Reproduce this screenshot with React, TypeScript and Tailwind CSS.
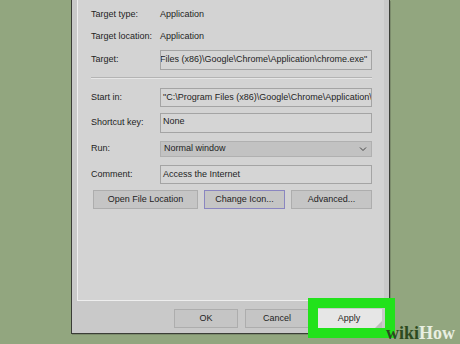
const font = { fontFamily: '"Liberation Sans", Arial, sans-serif' };

const Field = ({ label, children, h, mt }: { label: string; children: React.ReactNode; h: string; mt: string }) => (
  <div className={`flex items-center ${h} ${mt}`}>
    <div className="w-[69px] shrink-0 text-[9px] text-[#1e1e1e]">{label}</div>
    <div className="flex h-full min-w-0 flex-1 items-center">{children}</div>
  </div>
);

const Box = ({ children, dark }: { children: React.ReactNode; dark?: boolean }) => (
  <div
    className={`flex h-full w-full items-center overflow-hidden whitespace-nowrap border border-[#a4a4a4] pl-[2px] text-[9px] text-[#1e1e1e] ${
      dark ? "bg-[#c3c3c3]" : "bg-[#d5d5d5]"
    }`}
  >
    {children}
  </div>
);

const Btn = ({ children, w, focus }: { children: React.ReactNode; w: string; focus?: boolean }) => (
  <div
    className={`flex h-full items-center justify-center border bg-[#c5c5c5] text-[9px] text-[#1e1e1e] ${w} ${
      focus ? "border-[#8a86c0]" : "border-[#adadad]"
    }`}
  >
    {children}
  </div>
);

export default function App() {
  return (
    <div className="relative h-[344px] w-[460px] overflow-hidden bg-[#92a67f]" style={font}>
      <div className="ml-[71px] flex h-[334px] w-[319px] flex-col border-x border-b border-[#3a3d36] bg-[#c9c9c9] px-[5px] shadow-[1px_1px_0_#7c8c6c]">
        {/* tab panel */}
        <div className="flex h-[301px] flex-col border-b border-l border-[#eeeeee] bg-[#d3d3d3] pl-[13px] pr-[12px] pt-[6px]">
          <div className="flex h-[18px] items-center text-[9px] text-[#1e1e1e]">
            <div className="w-[69px]">Target type:</div>
            <div>Application</div>
          </div>
          <div className="mt-[4px] flex h-[18px] items-center text-[9px] text-[#1e1e1e]">
            <div className="w-[69px]">Target location:</div>
            <div>Application</div>
          </div>
          <Field label="Target:" h="h-[20px]" mt="mt-[4px]">
            <Box>
              <span className="ml-[-3px]">Files (x86)\Google\Chrome\Application\chrome.exe"</span>
            </Box>
          </Field>
          <div className="mt-[7px] h-px bg-[#b4b4b4]" />
          <div className="h-px bg-[#e6e6e6]" />
          <Field label="Start in:" h="h-[19px]" mt="mt-[9px]">
            <Box>"C:\Program Files (x86)\Google\Chrome\Application\chrome.exe"</Box>
          </Field>
          <Field label="Shortcut key:" h="h-[20px]" mt="mt-[6px]">
            <div className="flex h-full w-full items-start border border-[#a4a4a4] bg-[#d5d5d5] pl-[2px] pt-[1px] text-[9px] text-[#1e1e1e]">
              None
            </div>
          </Field>
          <Field label="Run:" h="h-[16px]" mt="mt-[8px]">
            <div className="flex h-full w-full items-center justify-between border border-[#b0b0b0] bg-[#c2c2c2] pl-[3px] pr-[4px] text-[9px] text-[#1e1e1e]">
              <span>Normal window</span>
              <svg width="8" height="6" viewBox="0 0 8 6" fill="none">
                <path d="M1 1.5 L4 4.5 L7 1.5" stroke="#444" strokeWidth="1" />
              </svg>
            </div>
          </Field>
          <Field label="Comment:" h="h-[19px]" mt="mt-[8px]">
            <Box>Access the Internet</Box>
          </Field>
          <div className="mt-[6px] flex h-[19px] pl-[2px]">
            <Btn w="w-[105px]">Open File Location</Btn>
            <div className="ml-[6px] flex h-full">
              <Btn w="w-[81px]" focus>
                Change Icon...
              </Btn>
            </div>
            <div className="ml-[6px] flex h-full">
              <Btn w="w-[81px]">Advanced...</Btn>
            </div>
          </div>
        </div>
        {/* bottom buttons */}
        <div className="mt-[8px] flex h-[19px] justify-end pr-[2px]">
          <Btn w="w-[64px]">OK</Btn>
          <div className="ml-[7px] flex h-full">
            <Btn w="w-[64px]">Cancel</Btn>
          </div>
          <div className="relative ml-[7px] flex h-full w-[66px] items-center justify-center bg-[#e6e6e6] text-[9px] text-[#1e1e1e]">
            Apply
            <div className="absolute bottom-0 right-0 h-0 w-0 border-b-[7px] border-l-[7px] border-b-[#bdbdbd] border-l-transparent" />
          </div>
        </div>
      </div>

      {/* highlight */}
      <div className="absolute left-[308px] top-[298px] h-[40px] w-[87px] border-[10px] border-[#22e21b]" />

      {/* logo */}
      <div
        className="absolute left-[386px] top-[324px] text-[18px] font-bold leading-none"
        style={{ fontFamily: '"Liberation Serif", "Times New Roman", serif' }}
      >
        <span className="text-[#2c4a20]">wiki</span>
        <span className="text-[#e9efe2]">How</span>
      </div>
    </div>
  );
}
